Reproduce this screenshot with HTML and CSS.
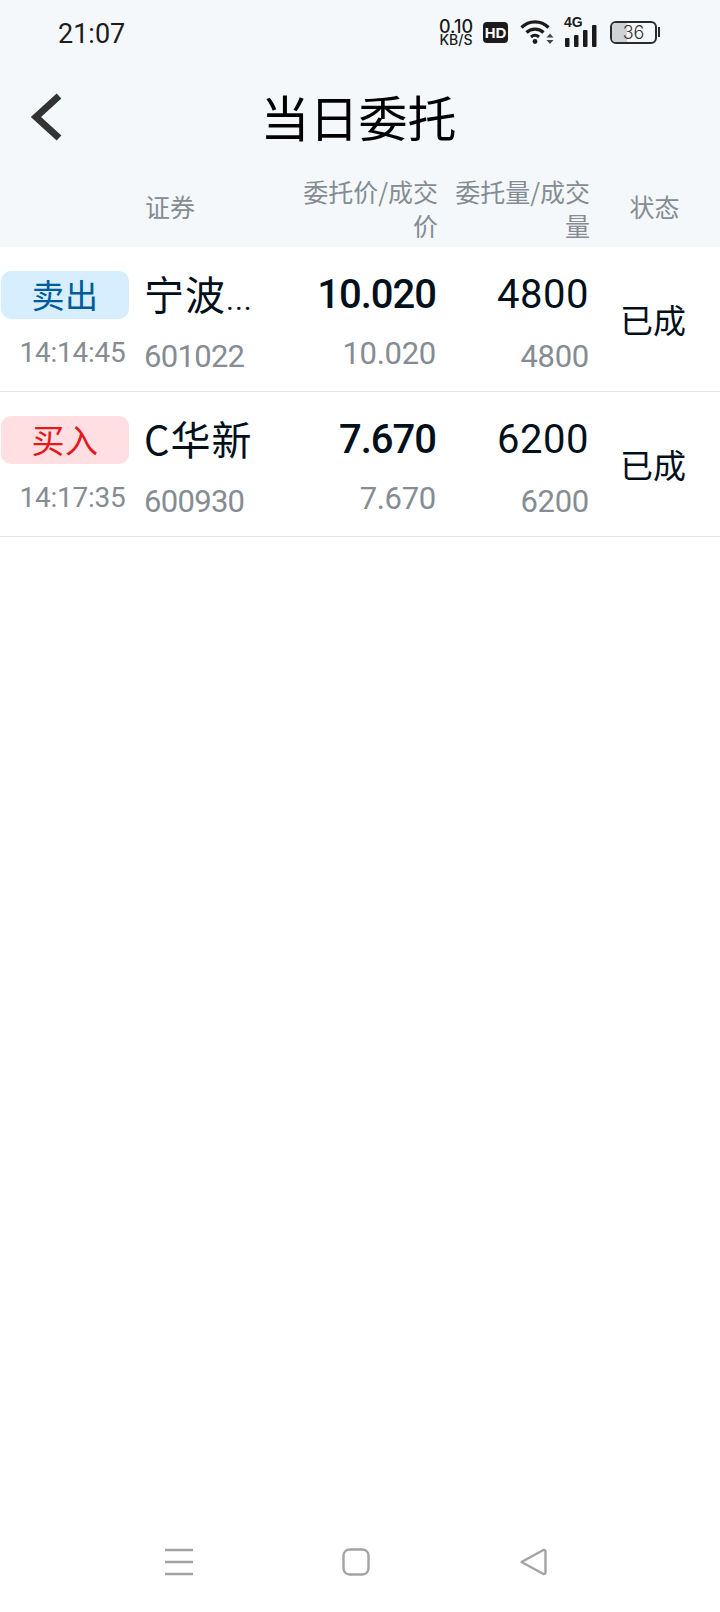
FILE: index.html

```html
<!DOCTYPE html>
<html lang="zh-CN">
<head>
    <meta charset="UTF-8">
    <meta name="viewport" content="width=device-width, initial-scale=1.0">
    <title>当日委托</title>
    <link rel="stylesheet" href="styles.css">
</head>
<body>
    <div class="page">
        <div class="top-area">
            <!-- 状态栏 -->
            <div class="status-bar">
                <span class="clock">21:07</span>
                <div class="status-icons">
                    <div class="net-speed"><span>0.10</span><span class="net-unit">KB/S</span></div>
                    <span class="hd-badge">HD</span>
                    <svg class="wifi" width="34" height="26" viewBox="0 0 34 26">
                        <path d="M1.500 8.500C9 1 21 1 28.500 8.500" fill="none" stroke="#1b1b1b" stroke-width="3.200"/>
                        <path d="M6.500 13.500C11 9 19 9 23.500 13.500" fill="none" stroke="#1b1b1b" stroke-width="3.200"/>
                        <path d="M11 18C13.500 15.800 16.500 15.800 19 18" fill="none" stroke="#1b1b1b" stroke-width="3"/>
                        <circle cx="15" cy="22.500" r="2.400" fill="#1b1b1b"/>
                        <path d="M26.500 18.500L30 14.500L33.500 18.500ZM26.500 21L33.500 21L30 25Z" fill="#444"/>
                    </svg>
                    <div class="signal">
                        <span class="signal-label">4G</span>
                        <svg width="33" height="22" viewBox="0 0 33 22">
                            <rect x="1" y="13" width="4.500" height="9" rx="1" fill="#1b1b1b"/>
                            <rect x="10" y="10" width="4.500" height="12" rx="1" fill="#1b1b1b"/>
                            <rect x="19" y="5" width="4.500" height="17" rx="1" fill="#1b1b1b"/>
                            <rect x="28" y="0" width="4.500" height="22" rx="1" fill="#1b1b1b"/>
                        </svg>
                    </div>
                    <div class="battery">
                        <div class="battery-body">
                            <div class="battery-fill"></div>
                            <span class="battery-level">36</span>
                        </div>
                        <div class="battery-cap"></div>
                    </div>
                </div>
            </div>

            <!-- 标题栏 -->
            <div class="title-bar">
                <svg class="back" width="34" height="50" viewBox="0 0 34 50">
                    <path d="M29 4L6 25L29 46" fill="none" stroke="#333" stroke-width="7"/>
                </svg>
                <h1 class="title">当日委托</h1>
            </div>

            <!-- 表头 -->
            <div class="row-grid table-head">
                <span></span>
                <span class="head-name">证券</span>
                <span class="head-num">委托价/成交价</span>
                <span class="head-num head-qty">委托量/成交量</span>
                <span class="head-state">状态</span>
            </div>
        </div>

        <div class="list">
            <div class="row-grid order">
                <div class="side-cell">
                    <span class="side side-sell">卖出</span>
                    <span class="time">14:14:45</span>
                </div>
                <div class="name-cell">
                    <span class="name">宁波<span class="name-dots">...</span></span>
                    <span class="code">601022</span>
                </div>
                <div class="num-cell">
                    <span class="main-num strong">10.020</span>
                    <span class="sub-num">10.020</span>
                </div>
                <div class="num-cell qty-cell">
                    <span class="main-num">4800</span>
                    <span class="sub-num">4800</span>
                </div>
                <span class="state">已成</span>
            </div>
            <div class="row-grid order">
                <div class="side-cell">
                    <span class="side side-buy">买入</span>
                    <span class="time">14:17:35</span>
                </div>
                <div class="name-cell">
                    <span class="name">C华新</span>
                    <span class="code">600930</span>
                </div>
                <div class="num-cell">
                    <span class="main-num strong">7.670</span>
                    <span class="sub-num">7.670</span>
                </div>
                <div class="num-cell qty-cell">
                    <span class="main-num">6200</span>
                    <span class="sub-num">6200</span>
                </div>
                <span class="state">已成</span>
            </div>
        </div>

        <!-- 底部导航 -->
        <div class="nav-bar">
            <svg width="28" height="28" viewBox="0 0 28 28">
                <path d="M0 2H28M0 14H28M0 26H28" stroke="#a3a3a3" stroke-width="2.400"/>
            </svg>
            <svg width="28" height="28" viewBox="0 0 28 28">
                <rect x="1.500" y="1.500" width="25" height="25" rx="6" fill="none" stroke="#a3a3a3" stroke-width="2.400"/>
            </svg>
            <svg width="28" height="28" viewBox="0 0 28 28">
                <path d="M2.500 14L24 2.200Q26.500 1.500 26.500 4V24Q26.500 26.500 24 25.800Z" fill="none" stroke="#a3a3a3" stroke-width="2.400" stroke-linejoin="round"/>
            </svg>
        </div>
    </div>
</body>
</html>
```

FILE: styles.css

```css
* {
    box-sizing: border-box;
}
body {
    margin: 0;
    background-color: #ffffff;
    font-family: "Noto Sans CJK SC", Roboto, sans-serif;
}
.page {
    width: 720px;
    height: 1612px;
    display: flex;
    flex-direction: column;
    overflow: hidden;
}
.top-area {
    background-color: #f4f8fb;
    height: 247px;
}

/* status bar */
.status-bar {
    height: 64px;
    padding: 4px 60px 0 58px;
    display: flex;
    justify-content: space-between;
    align-items: center;
}
.clock {
    font-family: Roboto, sans-serif;
    font-size: 27px;
    color: #1c1c1c;
}
.status-icons {
    display: flex;
    align-items: center;
    gap: 10px;
    margin-top: -4px;
}
.net-speed {
    width: 34px;
    display: flex;
    flex-direction: column;
    align-items: center;
    font-family: Inter, sans-serif;
    font-size: 18px;
    font-weight: 500;
    line-height: 15px;
    color: #1b1b1b;
}
.net-unit {
    font-size: 14px;
    line-height: 12px;
}
.hd-badge {
    width: 25px;
    height: 21px;
    border-radius: 4px;
    background-color: #1b1b1b;
    color: #ffffff;
    font-family: "Liberation Sans", sans-serif;
    font-size: 15px;
    font-weight: 700;
    line-height: 21px;
    text-align: center;
}
.wifi {
    margin-left: 2px;
}
.signal {
    position: relative;
    width: 34px;
    height: 30px;
    display: flex;
    align-items: flex-end;
}
.signal-label {
    position: absolute;
    left: 0;
    top: -3px;
    font-family: "Liberation Sans", sans-serif;
    font-size: 14px;
    font-weight: 700;
    color: #1b1b1b;
}
.battery {
    display: flex;
    align-items: center;
    margin-left: 2px;
}
.battery-body {
    position: relative;
    width: 47px;
    height: 23px;
    border: 2px solid #2a2a2a;
    border-radius: 6px;
    overflow: hidden;
}
.battery-fill {
    width: 36%;
    height: 100%;
    background-color: #cfd2d4;
}
.battery-level {
    position: absolute;
    left: 0;
    right: 0;
    top: 0;
    font-family: Inter, sans-serif;
    font-size: 18px;
    font-weight: 300;
    line-height: 19px;
    text-align: center;
    color: #333333;
}
.battery-cap {
    width: 2px;
    height: 10px;
    margin-left: 1px;
    background-color: #2a2a2a;
}

/* title bar */
.title-bar {
    position: relative;
    height: 112px;
    display: flex;
    justify-content: center;
    align-items: center;
}
.back {
    position: absolute;
    left: 30px;
    top: 28px;
}
.title {
    margin: -8px 3px 0 0;
    font-size: 49px;
    font-weight: 400;
    line-height: 64px;
    color: #000000;
}

/* table columns */
.row-grid {
    display: grid;
    grid-template-columns: 145px 140px 151px 153px 131px;
}
.table-head {
    height: 71px;
    margin-top: -6px;
    align-items: center;
    font-size: 25px;
    line-height: 34px;
    color: #858c93;
}
.head-num {
    margin-right: -2px;
    padding-top: 4px;
    text-align: right;
}
.head-qty {
    margin-right: -1px;
}
.head-state {
    text-align: center;
}

/* order rows */
.list {
    flex: 1;
}
.order {
    height: 145px;
    border-bottom: 1px solid #e3e5e7;
}
.side-cell {
    display: flex;
    flex-direction: column;
    align-items: center;
    padding-top: 24px;
}
.side {
    width: 128px;
    height: 48px;
    margin-right: 15px;
    border-radius: 10px;
    font-size: 33px;
    line-height: 47px;
    letter-spacing: 0.500px;
    text-align: center;
}
.side-sell {
    background-color: #d6eefd;
    color: #005a9c;
}
.side-buy {
    background-color: #ffdfe1;
    color: #e5181c;
}
.time {
    margin-top: 16px;
    font-family: Roboto, sans-serif;
    font-size: 28px;
    line-height: 36px;
    letter-spacing: -0.250px;
    color: #858c93;
}
.name-cell {
    display: flex;
    flex-direction: column;
    margin-left: -1px;
    padding-top: 18px;
}
.name {
    height: 56px;
    font-size: 40px;
    line-height: 56px;
    letter-spacing: 1px;
    color: #02101c;
}
.name-dots {
    font-family: Roboto, sans-serif;
    font-size: 30px;
}
.code {
    margin-top: 18px;
    font-family: Roboto, sans-serif;
    font-size: 31px;
    line-height: 36px;
    letter-spacing: -0.700px;
    color: #858c93;
}
.num-cell {
    display: flex;
    flex-direction: column;
    align-items: flex-end;
    padding-top: 22px;
}
.main-num {
    font-family: Roboto, sans-serif;
    font-size: 40px;
    line-height: 52px;
    letter-spacing: 0.500px;
    color: #02101c;
}
.main-num.strong {
    font-weight: 500;
    letter-spacing: -1px;
}
.sub-num {
    margin-top: 15px;
    font-family: Roboto, sans-serif;
    font-size: 31px;
    line-height: 36px;
    letter-spacing: -0.300px;
    color: #858c93;
}
.qty-cell .sub-num {
    margin-top: 18px;
}
.state {
    align-self: center;
    margin-right: 3px;
    font-size: 33px;
    line-height: 44px;
    text-align: center;
    color: #02101c;
}

/* bottom navigation */
.nav-bar {
    height: 92px;
    padding: 0 173px 8px 165px;
    display: flex;
    justify-content: space-between;
    align-items: center;
}
```
